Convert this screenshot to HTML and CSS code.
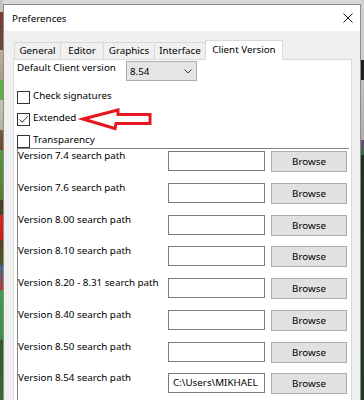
FILE: index.html
```html
<!DOCTYPE html>
<html lang="en">
<head>
    <meta charset="UTF-8">
    <meta name="viewport" content="width=device-width, initial-scale=1.0">
    <title>Preferences</title>
    <link rel="stylesheet" href="styles.css">
</head>
<body>

<div class="window">
    <div class="titlebar">
        <span class="title">Preferences</span>
        <svg class="close" width="10" height="10" viewBox="0 0 10 10">
            <path d="M0.5 0.5 L9.5 9.5 M9.5 0.5 L0.5 9.5" stroke="#111" stroke-width="1" fill="none"/>
        </svg>
    </div>

    <div class="dialog">
        <div class="tabs">
            <div class="tab tab-general">General</div>
            <div class="tab tab-editor">Editor</div>
            <div class="tab tab-graphics">Graphics</div>
            <div class="tab tab-interface">Interface</div>
            <div class="tab tab-client active">Client Version</div>
        </div>

        <div class="panel">
            <div class="default-row">
                <span class="default-label">Default Client version</span>
                <div class="combo">
                    <span>8.54</span>
                    <svg width="8" height="5" viewBox="0 0 8 5">
                        <path d="M0.5 0.5 L4 4 L7.5 0.5" stroke="#444" stroke-width="1" fill="none"/>
                    </svg>
                </div>
            </div>

            <div class="checks">
                <div class="check"><span class="box"></span>Check signatures</div>
                <div class="check">
                    <span class="box">
                        <svg width="11" height="11" viewBox="0 0 11 11">
                            <path d="M1.5 5.5 L4.2 8.3 L9.8 2.2" stroke="#333" stroke-width="1" fill="none"/>
                        </svg>
                    </span>Extended
                </div>
                <div class="check clipped"><span class="box"></span>Transparency</div>
            </div>

            <div class="paths">
                <div class="path-row">
                    <span class="path-label">Version 7.4 search path</span>
                    <div class="path-input"></div>
                    <div class="browse">Browse</div>
                </div>
                <div class="path-row">
                    <span class="path-label">Version 7.6 search path</span>
                    <div class="path-input"></div>
                    <div class="browse">Browse</div>
                </div>
                <div class="path-row">
                    <span class="path-label">Version 8.00 search path</span>
                    <div class="path-input"></div>
                    <div class="browse">Browse</div>
                </div>
                <div class="path-row">
                    <span class="path-label">Version 8.10 search path</span>
                    <div class="path-input"></div>
                    <div class="browse">Browse</div>
                </div>
                <div class="path-row">
                    <span class="path-label">Version 8.20 - 8.31 search path</span>
                    <div class="path-input"></div>
                    <div class="browse">Browse</div>
                </div>
                <div class="path-row">
                    <span class="path-label">Version 8.40 search path</span>
                    <div class="path-input"></div>
                    <div class="browse">Browse</div>
                </div>
                <div class="path-row">
                    <span class="path-label">Version 8.50 search path</span>
                    <div class="path-input"></div>
                    <div class="browse">Browse</div>
                </div>
                <div class="path-row">
                    <span class="path-label">Version 8.54 search path</span>
                    <div class="path-input">C:\Users\MIKHAEL</div>
                    <div class="browse">Browse</div>
                </div>
            </div>
        </div>
    </div>
</div>

<!-- red annotation arrow drawn over the dialog -->
<svg class="arrow" width="364" height="400" viewBox="0 0 364 400">
    <polygon points="83,119 118,110 118,114.5 150,114.5 150,123.5 116,123.5 115,128.5"
             fill="none" stroke="#e8161e" stroke-width="3" stroke-linejoin="miter"/>
</svg>

</body>
</html>
```

FILE: styles.css
```css
body {
    margin: 0;
    height: 400px;
    overflow: hidden;
    position: relative;
    font-family: "Noto Sans", "Liberation Sans", Arial, sans-serif;
    font-size: 9.8px;
    color: #000;
    background-color: #d8d8d8;
    background-image:
        linear-gradient(to bottom, #c9c2bc 0, #c9c2bc 12px, #7c3b2f 12px, #6a4a3a 50px, #b9ad9c 50px, #a89c8a 80px,
            #5fae3e 80px, #5fae3e 100px, #c8c0b0 100px, #b8b0a0 130px, #7a5a3a 130px, #6a4a2a 150px,
            #4f9a3a 150px, #5a7a30 200px, #4a3a22 200px, #4a4a2a 215px, #d42a22 215px, #c8201a 240px,
            #5a4020 240px, #4a5a28 265px, #3a6a9a 265px, #b83a30 290px, #3f9f48 290px, #3a9040 340px,
            #2f5a2a 340px, #3a6a30 400px),
        linear-gradient(to bottom, #cfcfcf 0, #cfcfcf 60px, #1e1e1e 60px, #222 80px, #c0c0c0 80px, #b0b0b0 140px,
            #6a4a7a 140px, #3a6a3a 155px, #1f2f1f 155px, #243a24 400px);
    background-size: 3px 400px, 3px 400px;
    background-position: left top, right top;
    background-repeat: no-repeat;
}

.window {
    margin: 4px 3px 0 3px;
    height: 396px;
    border: 1px solid #8c8c8c;
    border-bottom: none;
    box-sizing: border-box;
    background-color: #f0f0f0;
}

.titlebar {
    height: 26px;
    background-color: #fff;
    display: flex;
    align-items: center;
    justify-content: space-between;
    padding: 0 7px 0 8px;
}

.dialog {
    padding: 9px 8px 0 9px;
}

.tabs {
    display: flex;
    align-items: flex-end;
    height: 19px;
    margin-left: 1px;
    position: relative;
    z-index: 1;
}
.tab {
    box-sizing: border-box;
    height: 17px;
    margin-right: -1px;
    border: 1px solid #d9d9d9;
    border-bottom: none;
    background-color: #f0f0f0;
    text-align: center;
    line-height: 16px;
}
.tab-general { width: 47px; }
.tab-editor { width: 44px; }
.tab-graphics { width: 52px; }
.tab-interface { width: 52px; }
.tab-client { width: 78px; }
.tab.active {
    height: 20px;
    margin-bottom: -1px;
    background-color: #fff;
    line-height: 17px;
}

.panel {
    height: 340px;
    background-color: #fff;
    border: 1px solid #d9d9d9;
    border-bottom: none;
    padding: 1px 2px 0 3px;
}

.default-row {
    display: flex;
    align-items: flex-start;
}
.default-label {
    width: 109px;
    line-height: 14px;
}
.combo {
    box-sizing: border-box;
    width: 71px;
    height: 20px;
    border: 1px solid #adadad;
    background-color: #e5e5e5;
    display: flex;
    align-items: center;
    justify-content: space-between;
    padding: 0 4px 0 3px;
}

.checks {
    margin-top: 5px;
}
.check {
    box-sizing: border-box;
    height: 22px;
    padding-top: 3px;
    display: flex;
    align-items: flex-start;
    line-height: 14px;
}
.check .box {
    box-sizing: border-box;
    width: 13px;
    height: 13px;
    margin: 2px 3px 0 0;
    border: 1px solid #333;
    background-color: #fff;
    display: flex;
}
.check.clipped {
    height: 18px;
    overflow: hidden;
}

.paths {
    height: 260px;
    border-top: 1px solid #828282;
    border-left: 1px solid #828282;
    padding-top: 2px;
    background-color: #fff;
}

.path-row {
    height: 31.75px;
    display: flex;
    align-items: flex-start;
}
.path-label {
    flex: 0 0 150px;
    line-height: 14px;
    margin-top: -2px;
}
.path-input {
    box-sizing: border-box;
    width: 97px;
    height: 20px;
    border: 1px solid #7a7a7a;
    background-color: #fff;
    padding-left: 4px;
    line-height: 18px;
    white-space: nowrap;
    overflow: hidden;
}
.browse {
    box-sizing: border-box;
    width: 76px;
    height: 21px;
    margin-left: 6px;
    border: 1px solid #adadad;
    background-color: #e1e1e1;
    text-align: center;
    line-height: 19px;
}

.arrow {
    position: absolute;
    left: 0;
    top: 0;
    pointer-events: none;
}
```
